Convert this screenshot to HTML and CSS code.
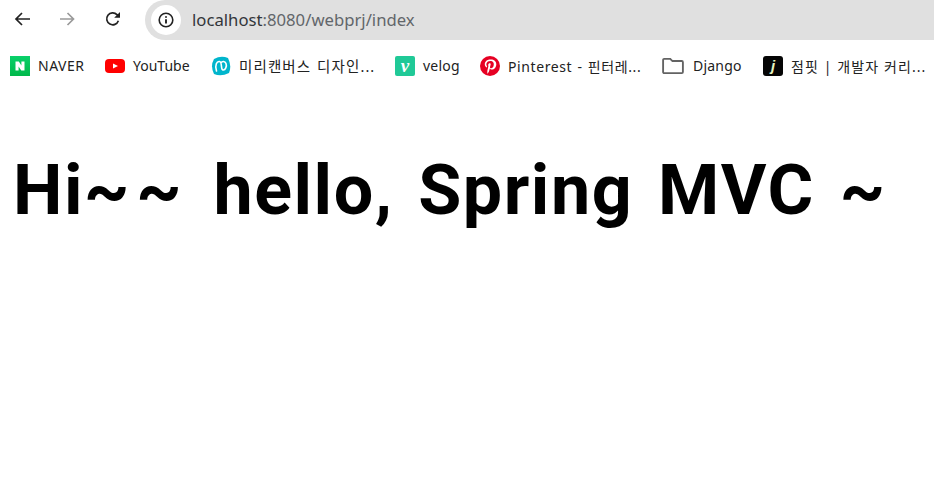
FILE: index.html
```html
<!DOCTYPE html>
<html>
<head>
    <meta charset="UTF-8">
    <meta name="viewport" content="width=device-width, initial-scale=1.0">
    <title>index</title>
    <link rel="stylesheet" href="styles.css">
</head>
<body>
    <div class="toolbar">
        <svg class="navIcon back" viewBox="0 0 16 16"><path d="M16 8H2M8 2L2 8l6 6" /></svg>
        <svg class="navIcon forward" viewBox="0 0 16 16"><path d="M1 8h13.500M8.500 2l6 6-6 6" /></svg>
        <svg class="navIcon reload" viewBox="0 0 16 16"><path d="M13.400 9.800A6 6 0 1 1 12 3.600L13.800 5.400" /><path class="fill" d="M15 1V6.800H9.200z" /></svg>
        <div class="address">
            <span class="infoWrap">
                <svg class="infoIcon" viewBox="0 0 16 16"><circle cx="8" cy="8" r="6.800" /><path class="bar" d="M8 7.200v4.400" /><path class="bar" d="M8 4.200v1.600" /></svg>
            </span>
            <span class="url"><span class="host">localhost</span>:8080/webprj/index</span>
        </div>
    </div>

    <div class="bookmarks">
        <a class="mark naver">
            <svg class="favicon" viewBox="0 0 20 20"><defs><linearGradient id="ng" x1="0" y1="0" x2="0" y2="1"><stop offset="0" stop-color="#0ad06a" /><stop offset="1" stop-color="#00b84a" /></linearGradient></defs><rect width="20" height="20" fill="url(#ng)" /><path fill="#fff" d="M5.500 5.500h3.300l2.600 4v-4h3.100v9h-3.200L8.600 10.500v4H5.500z" /></svg>
            NAVER
        </a>
        <a class="mark youtube">
            <svg class="favicon" viewBox="0 0 20 20"><rect y="3" width="20" height="14" rx="4" fill="#f00" /><path fill="#fff" d="M8 7.400l5 2.600-5 2.600z" /></svg>
            YouTube
        </a>
        <a class="mark canva">
            <svg class="favicon" viewBox="0 0 20 20"><path fill="#00b5cc" d="M3 3 Q10 -1 17 2 Q21 10 18 17 Q10 21 3 18 Q-1 10 3 3z" /><path fill="none" stroke="#fff" stroke-width="1.600" stroke-linecap="round" d="M5.500 15C3.500 9 6 5 8.500 5.500c3 .6 1 8 3.300 8.500C14.500 14.600 16 10 15 7.500 14 5 11 5 10 7" /></svg>
            미리캔버스 디자인...
        </a>
        <a class="mark velog">
            <span class="favicon letterIcon velogV">v</span>
            velog
        </a>
        <a class="mark pinterest">
            <svg class="favicon" viewBox="0 0 20 20"><circle cx="10" cy="10" r="10" fill="#e60023" /><path fill="#fff" d="M10.300 3.500C6.700 3.500 4.800 5.800 4.800 8.300c0 1.200.6 2.600 1.700 3.100.3.100.3 0 .5-.8 0-.2 0-.3-.1-.5-1.100-1.500-.5-5 3.500-5 3 0 3.700 2.300 3.300 4.200-.4 2.200-1.500 3-2.500 3-.8 0-1.400-.6-1.200-1.400.2-.9.700-1.900.7-2.600 0-1.700-2.500-1.400-2.500.8 0 .7.200 1.100.2 1.100l-1 4.200c-.2.900 0 2.400 0 3.100 0 .1.200.2.300.1.100-.2 1.200-1.700 1.500-2.900l.6-2.200c.3.500 1.100 1 2 1 2.600 0 4.500-2.400 4.500-5.300 0-2.800-2.300-4.700-5.300-4.700z" /></svg>
            Pinterest - 핀터레...
        </a>
        <a class="mark django">
            <svg class="favicon folder" viewBox="0 0 20 20"><path fill="none" stroke="#636363" stroke-width="1.700" d="M1 4.500a1 1 0 0 1 1-1h5.500l2 2H18a1 1 0 0 1 1 1V15.500a1 1 0 0 1-1 1H2a1 1 0 0 1-1-1z" /></svg>
            Django
        </a>
        <a class="mark jumpit">
            <span class="favicon letterIcon jumpitJ">j</span>
            점핏 | 개발자 커리...
        </a>
    </div>

    <h1 class="title">Hi<span class="tilde">~~</span> hello, Spring MVC ~</h1>
</body>
</html>
```

FILE: styles.css
```css
body {
    margin: 0;
    background-color: #fff;
    color: #000;
    font-family: "Noto Sans", "Noto Sans CJK KR", sans-serif;
}

.toolbar {
    display: flex;
    align-items: center;
    height: 40px;
    padding-left: 14px;
    overflow: hidden;
}

.navIcon {
    width: 16px;
    height: 16px;
    margin-right: 29px;
    margin-bottom: 3px;
    flex-shrink: 0;
    fill: none;
    stroke: #222;
    stroke-width: 1.700;
}

.navIcon .fill {
    fill: #222;
    stroke: none;
}

.navIcon.forward {
    margin-right: 30px;
    stroke: #9a9a9a;
}

.navIcon.reload {
    margin-right: 24px;
}

.address {
    flex: 1;
    display: flex;
    align-items: center;
    height: 40px;
    margin-right: -20px;
    padding-left: 6px;
    border-radius: 20px 0 0 20px;
    background-color: #e0e0e0;
}

.infoWrap {
    display: flex;
    align-items: center;
    justify-content: center;
    width: 30px;
    height: 30px;
    border-radius: 50%;
    background-color: #fff;
}

.infoIcon {
    width: 16px;
    height: 16px;
    fill: none;
    stroke: #222;
    stroke-width: 1.600;
}

.infoIcon .bar {
    stroke-width: 1.900;
}

.url {
    margin-left: 11px;
    margin-bottom: 2px;
    font-size: 16.700px;
    color: #62666a;
}

.host {
    color: #33363a;
}

.bookmarks {
    display: flex;
    align-items: center;
    height: 51px;
    padding-left: 10px;
    font-size: 14px;
    color: #222;
}

.mark {
    display: flex;
    align-items: center;
    white-space: nowrap;
}

.favicon {
    width: 20px;
    height: 20px;
    margin-right: 8px;
    flex-shrink: 0;
}

.folder {
    width: 22px;
    height: 22px;
    margin-right: 9px;
}

.naver { width: 95px; letter-spacing: 0.500px; }
.youtube { width: 106px; }
.canva { width: 184px; font-size: 14.500px; letter-spacing: 1.100px; word-spacing: 1px; }
.velog { width: 85px; letter-spacing: 0.200px; }
.pinterest { width: 182px; letter-spacing: 0.600px; word-spacing: 1px; }
.django { width: 101px; letter-spacing: 0.200px; }
.jumpit { letter-spacing: 1.100px; }

.letterIcon {
    display: flex;
    align-items: center;
    justify-content: center;
    border-radius: 2px;
    font-weight: bold;
    font-style: italic;
    line-height: 20px;
    letter-spacing: 0;
}

.velogV {
    background-color: #20c997;
    color: #fff;
    font-family: "Liberation Serif", serif;
    font-size: 19px;
}

.jumpitJ {
    border-radius: 3px;
    background-color: #050505;
    color: #e6f5c0;
    font-family: "Liberation Sans", sans-serif;
    font-size: 15px;
}

.title {
    margin: 51px 0 0 13px;
    font-family: Roboto, "Noto Sans", sans-serif;
    font-size: 70px;
    font-weight: bold;
    line-height: 96px;
    word-spacing: 6px;
    letter-spacing: 1.500px;
    white-space: nowrap;
}

.tilde {
    letter-spacing: 7px;
}
```
